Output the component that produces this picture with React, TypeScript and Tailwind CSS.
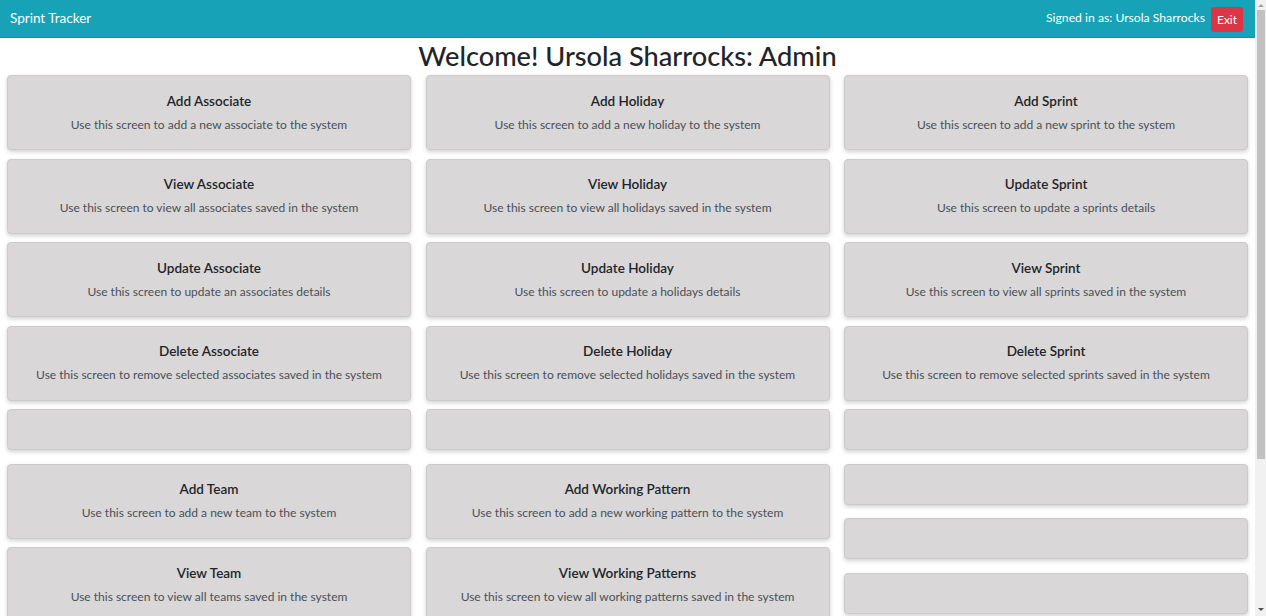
import React from "react";

type Card = { title?: string; text?: string };

const columns: Card[][] = [
    [
        {title: "Add Associate", text: "Use this screen to add a new associate to the system"},
        {title: "View Associate", text: "Use this screen to view all associates saved in the system"},
        {title: "Update Associate", text: "Use this screen to update an associates details"},
        {title: "Delete Associate", text: "Use this screen to remove selected associates saved in the system"},
        {},
        {title: "Add Team", text: "Use this screen to add a new team to the system"},
        {title: "View Team", text: "Use this screen to view all teams saved in the system"},
        {title: "Update Team", text: "Use this screen to update a teams details"},
    ],
    [
        {title: "Add Holiday", text: "Use this screen to add a new holiday to the system"},
        {title: "View Holiday", text: "Use this screen to view all holidays saved in the system"},
        {title: "Update Holiday", text: "Use this screen to update a holidays details"},
        {title: "Delete Holiday", text: "Use this screen to remove selected holidays saved in the system"},
        {},
        {title: "Add Working Pattern", text: "Use this screen to add a new working pattern to the system"},
        {title: "View Working Patterns", text: "Use this screen to view all working patterns saved in the system"},
        {title: "Update Working Pattern", text: "Use this screen to update a working patterns details"},
    ],
    [
        {title: "Add Sprint", text: "Use this screen to add a new sprint to the system"},
        {title: "Update Sprint", text: "Use this screen to update a sprints details"},
        {title: "View Sprint", text: "Use this screen to view all sprints saved in the system"},
        {title: "Delete Sprint", text: "Use this screen to remove selected sprints saved in the system"},
        {},
        {},
        {},
        {},
        {},
    ],
];

function MenuCard({title, text}: Card) {
    if (!title) {
        return (
            <div className="h-[41px] mb-[13.5px] shrink-0 rounded-[4px] border border-[#cccacb] bg-[#d9d7d8] shadow-[0_2px_4px_rgba(0,0,0,0.18)]"></div>
        );
    }
    return (
        <div className="h-[75px] mb-[8.5px] shrink-0 flex flex-col items-center justify-center gap-[4px] rounded-[4px] border border-[#cccacb] bg-[#d9d7d8] shadow-[0_2px_4px_rgba(0,0,0,0.18)]">
            <div className="text-[13.5px] leading-[20px] font-semibold text-[#212529]">{title}</div>
            <div className="text-[12px] leading-[20px] text-[#495057]">{text}</div>
        </div>
    );
}

export default function App() {
    return (
        <div className="flex h-[616px] w-[1266px] overflow-hidden bg-white font-['Lato',sans-serif]">
            <div className="flex-1 flex flex-col">
                <nav className="h-[38px] shrink-0 flex items-center justify-between bg-[#17a2b8] border-b border-[#1592a6] pl-[10px] pr-[12px]">
                    <span className="text-[13.5px] text-white">Sprint Tracker</span>
                    <div className="flex items-center gap-[6px] pt-[2px]">
                        <span className="text-[12.2px] text-white -mt-[2px]">Signed in as: Ursola Sharrocks</span>
                        <button className="h-[25px] w-[32px] rounded-[3px] bg-[#dc3545] text-[12px] text-white">Exit</button>
                    </div>
                </nav>
                <h1 className="h-[37px] shrink-0 text-center text-[27.2px] leading-[36px] font-medium text-[#212529]">
                    Welcome! Ursola Sharrocks: Admin
                </h1>
                <div className="grid grid-cols-3 gap-x-[14.5px] px-[7px]">
                    {columns.map((col, i) => (
                        <div key={i} className="flex flex-col">
                            {col.map((card, j) => (
                                <MenuCard key={j} {...card}/>
                            ))}
                        </div>
                    ))}
                </div>
            </div>
            {/* scrollbar */}
            <div className="w-[11px] shrink-0 flex flex-col items-center bg-[#f1f1f1]">
                <div className="h-[10px] flex items-center justify-center">
                    <div className="w-0 h-0 border-x-[3px] border-x-transparent border-b-[3px] border-b-[#a3a3a3]"></div>
                </div>
                <div className="h-[449px] w-[8px] bg-[#c1c1c1]"></div>
                <div className="flex-1"></div>
                <div className="h-[14px] flex items-center justify-center">
                    <div className="w-0 h-0 border-x-[3px] border-x-transparent border-t-[3px] border-t-[#505050]"></div>
                </div>
            </div>
        </div>
    );
}
